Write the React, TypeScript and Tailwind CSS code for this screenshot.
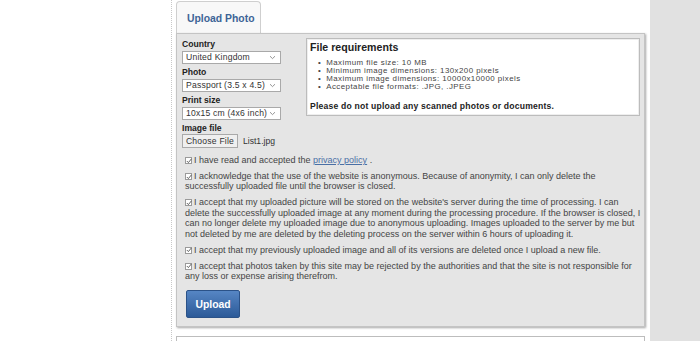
import React from "react";

const Chevron = () => (
  <svg width="7" height="5" viewBox="0 0 7 5" className="shrink-0">
    <path d="M1 1.2 L3.5 3.6 L6 1.2" fill="none" stroke="#888" strokeWidth="0.9" />
  </svg>
);

const Select = ({ value }: { value: string }) => (
  <div className="flex h-[13px] w-[99px] items-center justify-between border border-[#a9a9a9] bg-white pl-[3px] pr-[4px] text-[8.6px] leading-none tracking-[0.2px] text-[#333]">
    <span>{value}</span>
    <Chevron />
  </div>
);

const Check = () => (
  <span className="relative top-[1px] mr-[2px] inline-flex h-[7px] w-[7px] items-center justify-center border border-[#9a9a9a] bg-white align-baseline">
    <svg width="6" height="6" viewBox="0 0 6 6" className="absolute">
      <path d="M0.8 3 L2.4 4.6 L5.4 0.9" fill="none" stroke="#555" strokeWidth="0.9" />
    </svg>
  </span>
);

const Label = ({ children }: { children: React.ReactNode }) => (
  <div className="h-[11px] text-[8.6px] font-bold leading-[11px] text-[#222]">{children}</div>
);

const Bullet = ({ children }: { children: React.ReactNode }) => (
  <li className="flex h-[8.1px] items-center">
    <span className="mr-[5px]">•</span>
    {children}
  </li>
);

export default function App() {
  const font = { fontFamily: '"Liberation Sans", Arial, sans-serif' };
  return (
    <div className="flex h-[341px] w-[700px] overflow-hidden bg-white" style={font}>
      <div className="h-full w-[172px] shrink-0 border-r border-dotted border-[#c8c8c8]" />
      <div className="ml-[4px] flex w-[469px] shrink-0 flex-col pt-[1px]">
        {/* Tab */}
        <div className="flex h-[32px] w-[85px] shrink-0 items-center rounded-t-[4px] border border-b-0 border-[#cfcfcf] bg-[#f8f8f8] pl-[10px] pt-[2px] text-[10.4px] font-bold text-[#3d6496]">
          Upload Photo
        </div>
        {/* Panel */}
        <div className="flex h-[294px] shrink-0 flex-col border border-[#c4c4c4] bg-[#e5e5e5] pl-[5px] pr-[3px] shadow-[1px_1px_2px_rgba(0,0,0,0.35)]">
          <div className="flex pt-[4px]">
            <div className="mt-[1px] flex w-[124px] flex-col gap-[3px]">
              <div>
                <Label>Country</Label>
                <div className="mt-[1px]"><Select value="United Kingdom" /></div>
              </div>
              <div>
                <Label>Photo</Label>
                <div className="mt-[1px]"><Select value="Passport (3.5 x 4.5)" /></div>
              </div>
              <div>
                <Label>Print size</Label>
                <div className="mt-[1px]"><Select value="10x15 cm (4x6 inch)" /></div>
              </div>
              <div>
                <Label>Image file</Label>
                <div className="flex items-center">
                  <div className="flex h-[14px] w-[56px] items-center justify-center border border-[#a9a9a9] bg-[#efefef] text-[8.6px] tracking-[0.2px] text-[#333]">
                    Choose File
                  </div>
                  <span className="ml-[5px] text-[8.6px] text-[#333]">List1.jpg</span>
                </div>
              </div>
            </div>
            <div className="h-[78px] w-[334px] border border-[#bcbcbc] bg-white pl-[3px] pt-[2px] shadow-[inset_0_0_0_1px_#eee]">
              <div className="text-[10.6px] font-bold leading-[13px] text-[#222]">File requirements</div>
              <ul className="mt-[5px] pl-[8px] text-[7.9px] leading-[8px] tracking-[0.45px] text-[#444]">
                <Bullet>Maximum file size: 10 MB</Bullet>
                <Bullet>Minimum image dimensions: 130x200 pixels</Bullet>
                <Bullet>Maximum image dimensions: 10000x10000 pixels</Bullet>
                <Bullet>Acceptable file formats: .JPG, .JPEG</Bullet>
              </ul>
              <div className="mt-[10px] text-[8.6px] font-bold leading-[10px] tracking-[0.2px] text-[#222]">
                Please do not upload any scanned photos or documents.
              </div>
            </div>
          </div>
          <div className="ml-[3px] mt-[7px] flex w-[458px] flex-col gap-[5.6px] text-[9px] leading-[10.4px] text-[#444]">
            <p><Check />I have read and accepted the <span className="text-[#4a6fa5] underline">privacy policy</span> .</p>
            <p><Check />I acknowledge that the use of the website is anonymous. Because of anonymity, I can only delete the<br />successfully uploaded file until the browser is closed.</p>
            <p><Check />I accept that my uploaded picture will be stored on the website's server during the time of processing. I can<br />delete the successfully uploaded image at any moment during the processing procedure. If the browser is closed, I<br />can no longer delete my uploaded image due to anonymous uploading. Images uploaded to the server by me but<br />not deleted by me are deleted by the deleting process on the server within 6 hours of uploading it.</p>
            <p><Check />I accept that my previously uploaded image and all of its versions are deleted once I upload a new file.</p>
            <p><Check />I accept that photos taken by this site may be rejected by the authorities and that the site is not responsible for<br />any loss or expense arising therefrom.</p>
          </div>
          <div className="ml-[4px] mt-[9px] flex h-[28px] w-[54px] items-center justify-center rounded-[2px] border border-[#2b5288] bg-gradient-to-b from-[#5686c4] to-[#2c5a98] text-[10.4px] font-bold text-white">
            Upload
          </div>
        </div>
        <div className="mt-[9px] h-[20px] shrink-0 border-t border-l border-r border-[#bdbdbd] bg-white" />
      </div>
      <div className="ml-[5px] h-full flex-1 bg-[#e1e1e1]" />
    </div>
  );
}
